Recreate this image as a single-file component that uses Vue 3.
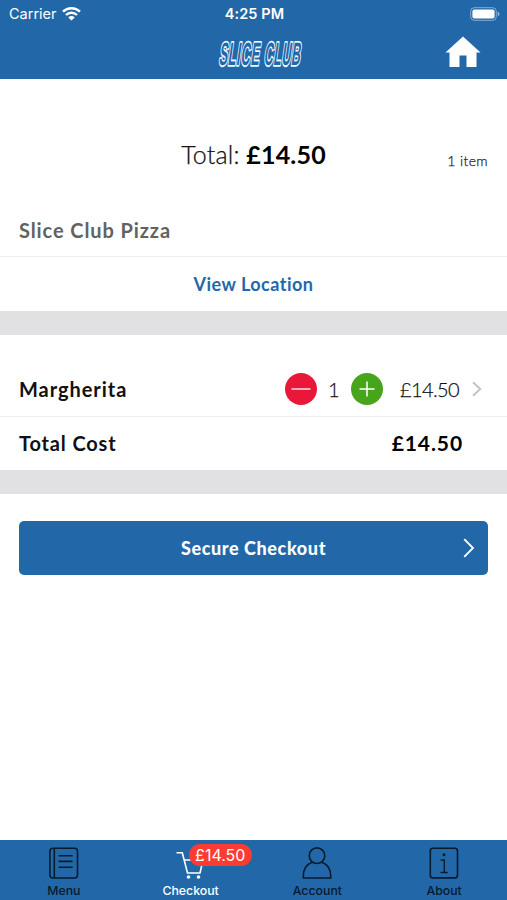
<script setup>
import { ref, computed } from 'vue'

const quantity = ref(1)
const unitPrice = 14.5
const price = computed(() => '£' + (quantity.value * unitPrice).toFixed(2))
const tabs = [
  { name: 'Menu', icon: 'menu' },
  { name: 'Checkout', icon: 'cart', active: true },
  { name: 'Account', icon: 'user' },
  { name: 'About', icon: 'info' },
]
</script>

<template>
  <div class="screen">
    <header class="header">
      <div class="status">
        <div class="carrier">
          <span>Carrier</span>
          <svg width="19" height="14" viewBox="0 0 19 14">
            <path d="M1 4.7a12.2 12.2 0 0 1 17 0" fill="none" stroke="#fff" stroke-width="2.5" />
            <path d="M4 8a7.8 7.8 0 0 1 11 0" fill="none" stroke="#fff" stroke-width="2.4" />
            <path d="M6.3 10.4a4.5 4.5 0 0 1 6.4 0L9.5 13.6z" fill="#fff" />
          </svg>
        </div>
        <span class="time">4:25 PM</span>
        <svg class="battery" width="30" height="14" viewBox="0 0 30 14">
          <rect x="0.7" y="0.7" width="25.6" height="12.6" rx="3.6" fill="none" stroke="#fff" stroke-opacity="0.45" />
          <rect x="2.4" y="2.4" width="22.2" height="9.2" rx="2" fill="#fff" />
          <path d="M27.6 4.8q2 .6 2 2.2t-2 2.2z" fill="#fff" fill-opacity="0.5" />
        </svg>
      </div>
      <div class="nav">
        <svg class="logo" width="120" height="50" viewBox="0 0 120 50">
          <g transform="translate(18.4 38) skewX(-8) scale(1 1.95)">
            <text class="logo-text" x="0" y="0" textLength="41" lengthAdjust="spacingAndGlyphs">SLICE</text>
            <text class="logo-text" x="45" y="0" textLength="37" lengthAdjust="spacingAndGlyphs">CLUB</text>
          </g>
        </svg>
        <svg class="home" width="36" height="32" viewBox="0 0 36 32">
          <path d="M18 .5 35.5 16.5H31.5V31H21.5V19.5H14.5V31H4.5V16.5H.5z" fill="#fff" />
        </svg>
      </div>
    </header>

    <section class="summary">
      <div class="total"><span class="total-label">Total:</span> <b>{{ price }}</b></div>
      <span class="count">{{ quantity }} item</span>
    </section>
    <section class="row store"><span>Slice Club Pizza</span></section>
    <section class="row location"><span>View Location</span></section>
    <div class="band"></div>

    <section class="row item">
      <span class="name">Margherita</span>
      <button class="step minus" aria-label="Remove one" @click="quantity = Math.max(1, quantity - 1)">
        <svg width="32" height="32" viewBox="0 0 32 32"><path d="M6.5 16H25.5" stroke="#fff" stroke-width="1.3" /></svg>
      </button>
      <span class="quantity">{{ quantity }}</span>
      <button class="step plus" aria-label="Add one" @click="quantity++">
        <svg width="32" height="32" viewBox="0 0 32 32"><path d="M8.5 16H23.5M16 8.5V23.5" stroke="#fff" stroke-width="1.5" /></svg>
      </button>
      <span class="price">{{ price }}</span>
      <svg class="chevron" width="10" height="16" viewBox="0 0 10 16">
        <path d="M1 1.3 8.2 8 1 14.7" fill="none" stroke="#c3c3c6" stroke-width="2" />
      </svg>
    </section>
    <section class="row cost">
      <span class="name cost-label">Total Cost</span>
      <span class="cost-value">{{ price }}</span>
    </section>
    <div class="band"></div>

    <button class="checkout">
      <span></span>
      <span class="checkout-label">Secure Checkout</span>
      <svg width="12" height="20" viewBox="0 0 12 20">
        <path d="M1.2 1.2 10 10 1.2 18.8" fill="none" stroke="#fff" stroke-width="1.8" />
      </svg>
    </button>

    <nav class="tabs">
      <div v-for="tab in tabs" :key="tab.name" class="tab" :class="{ active: tab.active }">
        <svg class="icon" width="34" height="34" viewBox="0 0 34 34" fill="none" stroke="currentColor" stroke-width="1.6">
          <template v-if="tab.icon === 'menu'">
            <rect x="3.9" y="2.3" width="27.6" height="29.7" rx="3" />
            <path d="M8.3 2V32M12.6 9.8H26.6M12.6 15.4H26.6M12.6 21.2H26.6" />
          </template>
          <template v-else-if="tab.icon === 'cart'">
            <path d="M3.5 6.7H9.3L14.5 27H27L30 14H11.5" />
            <circle cx="15.5" cy="31" r="1.8" fill="currentColor" stroke="none" />
            <circle cx="25.5" cy="31" r="1.8" fill="currentColor" stroke="none" />
          </template>
          <template v-else-if="tab.icon === 'user'">
            <circle cx="17" cy="9.7" r="7.8" />
            <path d="M12.5 16C6.3 18.5 3.3 22.8 3.3 30V32H30.7V30C30.7 22.8 27.7 18.5 21.5 16" />
          </template>
          <template v-else>
            <rect x="3.3" y="2.3" width="27.2" height="29.6" rx="2.7" />
            <path d="M13.7 14H17.3V26M13.5 26.5H20.7" stroke-width="1.4" />
            <circle cx="17" cy="8.7" r="1.5" fill="currentColor" stroke="none" />
          </template>
        </svg>
        <span class="tab-label">{{ tab.name }}</span>
        <span v-if="tab.active" class="badge">{{ price }}</span>
      </div>
    </nav>
  </div>
</template>

<style>
body { background: #fff; }
</style>

<style scoped>
.screen {
  display: flex;
  flex-direction: column;
  width: 507px;
  height: 900px;
  overflow: hidden;
  background: #fff;
  color: #111;
  font-family: Lato, sans-serif;
}
.header { height: 79px; flex: none; background: #2268a9; color: #fff; }
.status {
  display: grid;
  grid-template-columns: 1fr auto 1fr;
  align-items: center;
  height: 27px;
  padding: 0 7px 0 9px;
  font: 14.5px/27px Inter, sans-serif;
}
.carrier { display: flex; align-items: center; gap: 5px; }
.time { font-weight: 600; letter-spacing: 0.1px; }
.battery { justify-self: end; }
.nav {
  display: grid;
  grid-template-columns: 1fr auto 1fr;
  align-items: center;
  height: 50px;
  padding: 0 26px;
}
.logo { grid-column: 2; margin-left: 13px; overflow: visible; }
.home { justify-self: end; }
.logo-text {
  font: bold 16.5px "Liberation Sans Narrow", "Liberation Sans", sans-serif;
  letter-spacing: 1px;
  fill: #2268a9;
  stroke: #f0f7ff;
  stroke-width: 3;
  stroke-linejoin: round;
  paint-order: stroke;
  vector-effect: non-scaling-stroke;
}
.summary {
  display: grid;
  grid-template-columns: 1fr auto 1fr;
  align-items: center;
  height: 124px;
  flex: none;
  padding: 25px 19px 0;
  box-sizing: border-box;
}
.total { grid-column: 2; font-size: 25px; line-height: 30px; letter-spacing: 0.2px; }
.total b { color: #000; }
.total-label { font-weight: 300; -webkit-text-stroke: 0.25px; }
.count {
  justify-self: end;
  padding-top: 15px;
  font-size: 14px;
  font-weight: 300;
  letter-spacing: 0.4px;
  line-height: 18px;
  color: #222;
  -webkit-text-stroke: 0.25px;
}
.row {
  display: flex;
  align-items: center;
  flex: none;
  box-sizing: border-box;
  height: 54px;
  padding: 0 19px;
  font-size: 20px;
  font-weight: 700;
}
.store { border-bottom: 1px solid #eee; color: #626262; letter-spacing: 0.9px; }
.location { justify-content: center; color: #2268a9; font-size: 18px; letter-spacing: 0.48px; }
.band { height: 24px; flex: none; background: #e1e1e3; }
.item { height: 82px; padding-top: 27px; border-bottom: 1px solid #eee; }
.name { margin-right: auto; letter-spacing: 0.95px; }
.cost-label { letter-spacing: 0.85px; }
.cost { height: 53px; padding: 0 44px 2px 19px; }
.cost-value { font-size: 21px; letter-spacing: 0.9px; color: #000; }
.step { display: block; width: 32px; height: 32px; padding: 0; border: 0; border-radius: 50%; }
.step svg { display: block; }
.minus { background: #e9183a; }
.plus { background: #47a51b; }
.quantity { width: 34px; text-align: center; font-weight: 300; -webkit-text-stroke: 0.25px; }
.price { margin-left: 17px; font-weight: 300; letter-spacing: -0.6px; -webkit-text-stroke: 0.25px; }
.chevron { margin: 0 6px 0 13px; }
.checkout {
  display: grid;
  grid-template-columns: 1fr auto 1fr;
  align-items: center;
  flex: none;
  height: 54px;
  margin: 27px 19px 0;
  padding: 0 13px;
  border: 0;
  border-radius: 5px;
  background: #2268a9;
  color: #fff;
  font: 900 18px Lato, sans-serif;
  letter-spacing: 0.6px;
}
.checkout svg { justify-self: end; }
.tabs { display: flex; height: 60px; flex: none; margin-top: auto; background: #2268a9; }
.tab {
  position: relative;
  display: flex;
  flex: 1;
  flex-direction: column;
  align-items: center;
  padding-top: 6px;
  color: #081a2c;
}
.active { color: #fff; }
.icon { display: block; flex: none; }
.tab-label { margin: 3px 0 0 1px; font: 500 12.3px/16px Inter, sans-serif; }
.badge {
  position: absolute;
  top: 4px;
  left: 62px;
  width: 63px;
  height: 22px;
  border-radius: 11px;
  background: #fc3b32;
  color: #fff;
  font: 16px/22px Inter, sans-serif;
  text-align: center;
}
</style>
